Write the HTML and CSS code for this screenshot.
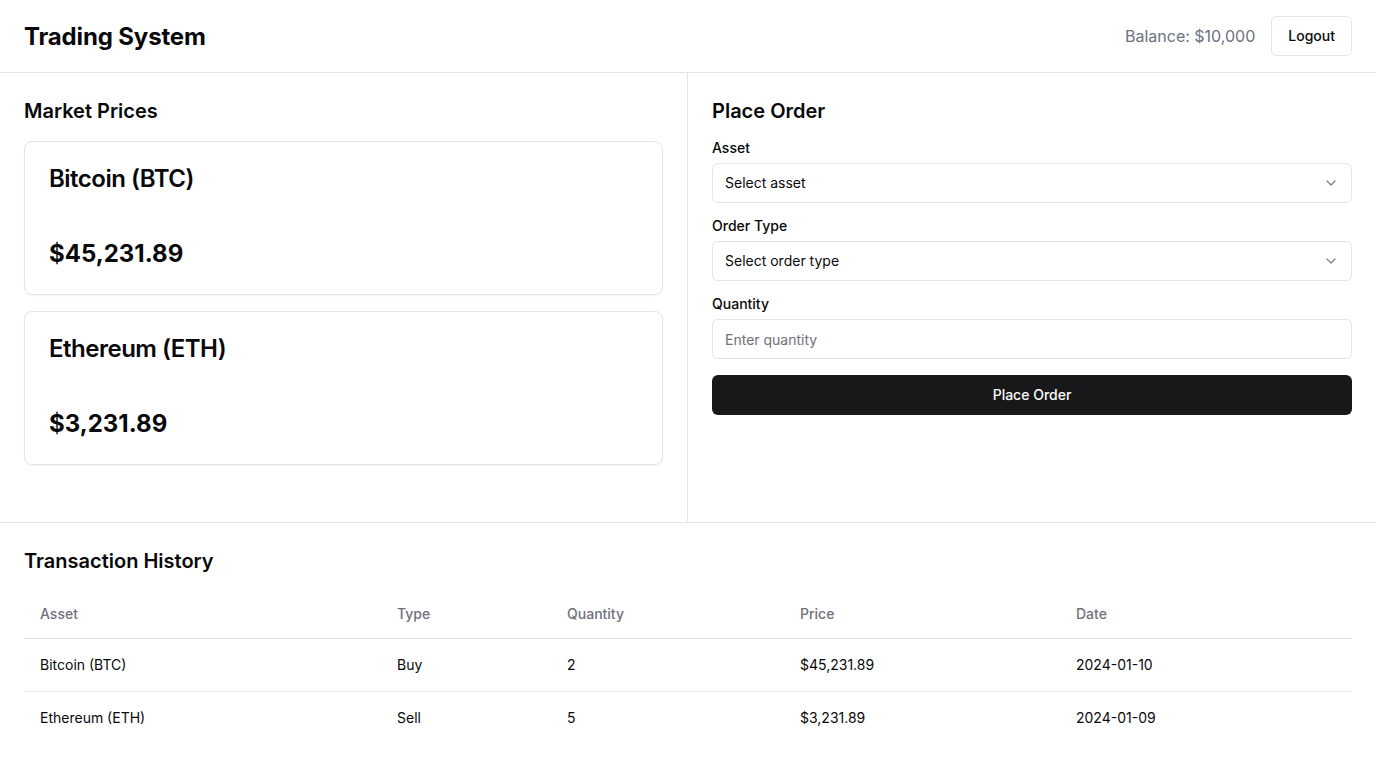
FILE: index.html
```html
<!DOCTYPE html>
<html lang="en">
<head>
<meta charset="utf-8">
<title>Trading System</title>
<link rel="stylesheet" href="styles.css">
</head>
<body>
<header class="topbar">
  <h1 class="brand">Trading System</h1>
  <div class="topbar-right">
    <span class="balance">Balance: $10,000</span>
    <button class="btn-outline">Logout</button>
  </div>
</header>
<main>
  <div class="top-grid">
    <section class="col col-left">
      <h2 class="section-title">Market Prices</h2>
      <div class="cards">
        <div class="card">
          <div class="card-title">Bitcoin (BTC)</div>
          <div class="card-price">$45,231.89</div>
        </div>
        <div class="card">
          <div class="card-title">Ethereum (ETH)</div>
          <div class="card-price">$3,231.89</div>
        </div>
      </div>
    </section>
    <section class="col">
      <h2 class="section-title title-tight">Place Order</h2>
      <div class="form">
        <div class="field">
          <label class="label">Asset</label>
          <div class="select">
            <span>Select asset</span>
            <svg class="chev" viewBox="0 0 24 24" width="16" height="16" fill="none" stroke="currentColor" stroke-width="2" stroke-linecap="round" stroke-linejoin="round"><path d="m6 9 6 6 6-6"/></svg>
          </div>
        </div>
        <div class="field">
          <label class="label">Order Type</label>
          <div class="select">
            <span>Select order type</span>
            <svg class="chev" viewBox="0 0 24 24" width="16" height="16" fill="none" stroke="currentColor" stroke-width="2" stroke-linecap="round" stroke-linejoin="round"><path d="m6 9 6 6 6-6"/></svg>
          </div>
        </div>
        <div class="field">
          <label class="label">Quantity</label>
          <input class="input" placeholder="Enter quantity">
        </div>
        <button class="btn-primary">Place Order</button>
      </div>
    </section>
  </div>
  <section class="history">
    <h2 class="section-title title-hist">Transaction History</h2>
    <table class="table">
      <thead>
        <tr>
          <th class="c1">Asset</th>
          <th class="c2">Type</th>
          <th class="c3">Quantity</th>
          <th class="c4">Price</th>
          <th class="c5">Date</th>
        </tr>
      </thead>
      <tbody>
        <tr>
          <td>Bitcoin (BTC)</td>
          <td>Buy</td>
          <td>2</td>
          <td>$45,231.89</td>
          <td>2024-01-10</td>
        </tr>
        <tr>
          <td>Ethereum (ETH)</td>
          <td>Sell</td>
          <td>5</td>
          <td>$3,231.89</td>
          <td>2024-01-09</td>
        </tr>
      </tbody>
    </table>
  </section>
</main>
</body>
</html>
```

FILE: styles.css
```css
* { box-sizing: border-box; }
html, body { margin: 0; padding: 0; }
body {
  font-family: Inter, "Liberation Sans", sans-serif;
  color: #09090b;
  background: #fff;
}
.topbar {
  display: flex;
  align-items: center;
  justify-content: space-between;
  padding: 16px 24px;
  height: 73px;
  border-bottom: 1px solid #e4e4e7;
}
.brand {
  margin: 1px 0 0;
  font-size: 24px;
  line-height: 32px;
  font-weight: 700;
  letter-spacing: -0.15px;
}
.topbar-right {
  display: flex;
  align-items: center;
  gap: 16px;
}
.balance {
  font-size: 16px;
  color: #6b7280;
}
.btn-outline {
  height: 40px;
  padding: 0 16px 1px;
  border: 1px solid #e4e4e7;
  border-radius: 6px;
  background: #fff;
  font-family: inherit;
  font-size: 14px;
  font-weight: 500;
  color: #09090b;
}
.top-grid {
  display: grid;
  grid-template-columns: 688px 688px;
  height: 450px;
  border-bottom: 1px solid #e4e4e7;
}
.col {
  padding: 24px;
}
.col-left {
  border-right: 1px solid #e4e4e7;
  width: 688px;
}
.section-title {
  margin: 0 0 16px;
  font-size: 20px;
  line-height: 28px;
  font-weight: 600;
}
.title-tight { margin-bottom: 12px; }
.title-hist { margin-bottom: 15px; }
.cards {
  display: flex;
  flex-direction: column;
  gap: 16px;
}
.card {
  border: 1px solid #e4e4e7;
  border-radius: 8px;
  padding: 24px;
  box-shadow: 0 1px 2px rgba(0,0,0,0.04);
  height: 154px;
}
.card-title {
  font-size: 24px;
  line-height: 25px;
  font-weight: 600;
  letter-spacing: -0.5px;
}
.card-price {
  margin-top: 47px;
  font-size: 24px;
  line-height: 32px;
  font-weight: 700;
}
.form {
  display: flex;
  flex-direction: column;
  gap: 12px;
}
.field {
  display: flex;
  flex-direction: column;
  gap: 5px;
}
.label {
  font-size: 14px;
  line-height: 20px;
  padding-top: 1px;
  font-weight: 500;
}
.select {
  height: 40px;
  border: 1px solid #e4e4e7;
  border-radius: 6px;
  padding: 0 12px 2px;
  display: flex;
  align-items: center;
  justify-content: space-between;
  font-size: 14px;
}
.chev {
  color: #09090b;
  opacity: 0.5;
  margin-top: 2px;
}
.input {
  height: 40px;
  border: 1px solid #e4e4e7;
  border-radius: 6px;
  padding: 0 12px;
  font-family: inherit;
  font-size: 14px;
  color: #09090b;
  outline: none;
}
.input::placeholder { color: #71717a; }
.btn-primary {
  margin-top: 4px;
  height: 40px;
  border: none;
  border-radius: 6px;
  background: #18181b;
  color: #fafafa;
  font-family: inherit;
  font-size: 14px;
  font-weight: 500;
  padding-bottom: 2px;
}
.history {
  padding: 24px;
}
.table {
  width: 100%;
  border-collapse: collapse;
  font-size: 14px;
}
.table th {
  height: 48px;
  padding: 0 16px;
  text-align: left;
  font-weight: 500;
  color: #71717a;
  border-bottom: 1px solid #e4e4e7;
}
.table td {
  padding: 16px;
  line-height: 20px;
}
.table tbody tr + tr td { border-top: 1px solid #e4e4e7; }
.c1 { width: 357px; }
.c2 { width: 170px; }
.c3 { width: 233px; }
.c4 { width: 276px; }
.c5 { width: 292px; }
```
